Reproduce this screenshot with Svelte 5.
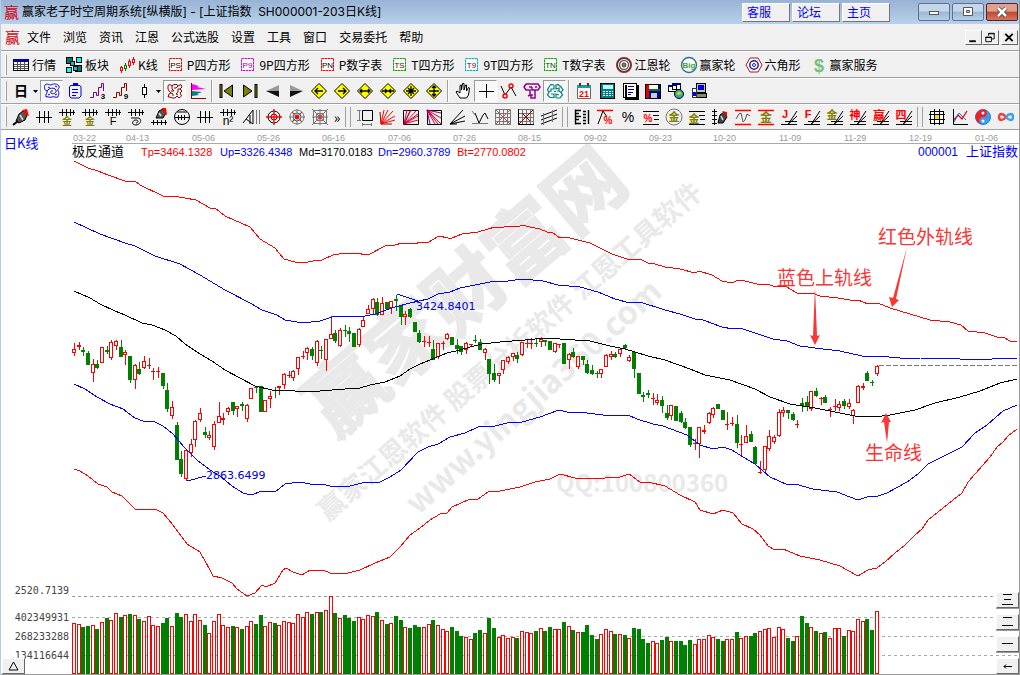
<script>
  const cjk = 'font-family="Noto Sans CJK SC, sans-serif"';
  const lat = 'font-family="Liberation Sans, sans-serif"';
  const crisp = 'shape-rendering="crispEdges"';

  const line = (d, c = '#000', w = 1) => `<path d="${d}" fill="none" stroke="${c}" stroke-width="${w}"/>`;
  const shape = (d, f, s = 'none') => `<path d="${d}" fill="${f}" stroke="${s}"/>`;
  const glyph = (t, x, y, size, c, bold = false, fam = cjk) =>
    `<text x="${x}" y="${y}" font-size="${size}" fill="${c}" text-anchor="middle" ${bold ? 'font-weight="700"' : ''} ${fam}>${t}</text>`;
  const boxed = (t, border, ink) =>
    `<rect x="2.5" y="2.5" width="12" height="12" fill="#fff" stroke="${border}" stroke-dasharray="2 1" ${crisp}/>` +
    `<rect x="2.5" y="2.5" width="12" height="12" fill="none" stroke="${border}" stroke-opacity="0.5" ${crisp}/>` + glyph(t, 8.5, 12, 8, ink, false, lat);
  const diamond = (inner) => shape('M9 1.5L16.5 9L9 16.5L1.5 9Z', '#ffff00', '#000') + line(inner, '#000', 1.3);
  const comb = line('M1 4.5H17M4.5 1V8M8.5 1V8M12.5 1V8M15.5 2V7');
  const pen = shape('M4 13L7 6L11 3L15 7L13 12L7 15Z', '#555', '#000') + shape('M10 2L15 1L17 8L14 7Z', '#f00') + line('M8 7L11 12', '#ddd', 1.5) + line('M1 17L6 13', '#000', 2);
  const slopes = line('M1 16.5H8L17 3M8 16.5L17 8M8 16.5H17M5 13.5H17');
  const fan = (c, box = '') => box + line('M2 16L5 2M2 16L9 2M2 16L14 3M2 16L16 8M2 16L16 12', c);
  const nine = line('M1.5 1.5H16.5V16.5H1.5ZM1.5 5.5H16.5M1.5 9.5H16.5M1.5 13.5H16.5M5.5 1.5V16.5M9.5 1.5V16.5M13.5 1.5V16.5', '#777');
  const ring = (r, c, w = 1.5, f = 'none') => `<circle cx="9" cy="9" r="${r}" fill="${f}" stroke="${c}" stroke-width="${w}"/>`;

  const art = {
    table: `<g ${crisp}>` + shape('M1.5 3.5H16.5V14.5H1.5Z', '#fff', '#000') + shape('M1 3H17V6H1Z', '#0000a0') + line('M2 8.5H16M2 10.5H16M2 12.5H16M5.5 6V14M8.5 6V14M12.5 6V14', '#555') + '</g>',
    board: `<g ${crisp}>` + shape('M1.5 1.5H7.5V7.5H1.5ZM10.5 9.5H16.5V15.5H10.5Z', '#007878', '#000') + shape('M11.5 1.5H16.5V6.5H11.5ZM1.5 11.5H6.5V16.5H1.5Z', '#00ffff', '#000') + shape('M5.5 5.5H9.5V9.5H5.5ZM8.5 10.5H12.5V14.5H8.5Z', '#00c8c8', '#000') + '</g>',
    candles: `<g ${crisp}>` + line('M3.5 10V17M15.5 1V9M11.5 3V12', '#f00') + line('M7.5 7V15', '#008000') + shape('M2.5 11.5H4.5V14.5H2.5ZM14.5 3.5H16.5V6.5H14.5ZM10.5 5.5H12.5V9.5H10.5Z', '#fff', '#f00') + shape('M6.5 9.5H8.5V12.5H6.5Z', '#fff', '#008000') + '</g>',
    ps: boxed('PS', '#f00', '#000'), p9: boxed('P9', '#e000e0', '#900090'), pn: boxed('PN', '#f00', '#000'),
    ts: boxed('TS', '#00b000', '#800000'), t9: boxed('T9', '#00b8b8', '#800000'), tn: boxed('TN', '#00b000', '#004000'),
    wheel: ring(7, '#842838', 2, '#fff') + ring(4.5, '#507860') + ring(2, '#842838', 1, '#5a8a6a'),
    big: ring(7.5, '#287088', 1.3, '#fff') + glyph('Big', 9, 12, 8, '#3a9a3a', true, lat),
    hex: shape('M5 2H13L17 9L13 16H5L1 9Z', '#fff', '#b01020') + ring(4.2, '#2020a0') + ring(1.5, '#2020a0', 1),
    dollar: glyph('$', 9, 16, 18, '#78c078', true, lat),
    day: glyph('日', 9, 14, 14, '#000', true),
    flow: line('M2 3C4 1 6 3 8 3C11 1 14 2 16 4C17 6 14 7 15 9C17 11 15 13 15 15C13 16 11 14 9 15C6 16 4 14 3 15C2 12 5 11 4 9C1 8 1 5 2 3ZM4 9C6 6 11 5 13 8C14 11 10 13 8 11C7 10 8 8 10 9M5 5L7 6M12 4L14 5M5 13L7 12M12 13L14 12', '#0000e0'),
    clip: line('M4.5 3.5H14L15 5V14L13 16H5L3.5 14V5ZM6 7.5H12M6 10.5H12M6 13.5H10', '#0000e0') + shape('M7 1H12V4H7Z', '#0000e0'),
    wave3: line('M1 15.5H4.5V10.5H7.5V13.5H9.5V5.5H12.5V1.5H14.5V9', '#800080') + glyph('3', 14, 17, 8, '#000', true, lat),
    wave9: line('M1 15.5H4.5V10.5H7.5V13.5H9.5V5.5H12.5V1.5H14.5V9', '#900000') + glyph('9', 14, 17, 8, '#000', true, lat),
    candle: `<g ${crisp}>` + line('M9.5 2V5M9.5 13V16') + shape('M7.5 5.5H11.5V12.5H7.5Z', '#fff', '#000') + '</g>',
    gear: line('M2 3.5L4 2.5L6 4L8 2.5H11L12 4L15 2.5L16 5L14 7L16 9L14 11L15.500 14L13 16L11 14L9 16H6L4 15H2L3 12L5 11L3 9L2 7ZM6 4V7L8 9H5M12 4L10 6H8M14 7H12V10L10 12L12 13M5 11L7 12V14', '#900000'),
    flags: `<g ${crisp}>` + line('M2.5 1V16.5H17', '#900000') + '</g>' + shape('M3 2L10 4L8 5L17 7L3 8Z', '#ff00ff') + shape('M3 9L13 10L8 12L10 13L3 14Z', '#008080'),
    first: shape('M14.5 3V15L6 9Z', '#808000', '#000') + line('M3 2V16', '#000', 3) + line('M3 3V15', '#808000'),
    last: shape('M2.5 3V15L11 9Z', '#808000', '#000') + line('M15 2V16', '#000', 3) + line('M15 3V15', '#808000'),
    prev: shape('M2 9L15 3V9Z', '#999') + shape('M2 9L15 15V9Z', '#111'),
    next: shape('M16 9L3 3V9Z', '#999') + shape('M16 9L3 15V9Z', '#111'),
    dl: diamond('M5 9H13M8 6L5 9L8 12'), dr: diamond('M5 9H13M10 6L13 9L10 12'),
    dlr: diamond('M4 9H14M6 7L4 9L6 11M12 7L14 9L12 11'), din: diamond('M3 9H15M6 7L8 9L6 11M12 7L10 9L12 11'),
    dall: diamond('M4 9H14M9 4V14M6 6L12 12M12 6L6 12'), dud: diamond('M4 9H14M9 4V14M7 6L9 4L11 6M7 12L9 14L11 12'),
    hand: shape('M6 16L2 10L3 9L6 11V3.5L7.5 3V8L8.5 1.5H10V8L11.5 3H12.5V9L14.5 5.5L15.5 6L14.5 13L12.5 16Z', '#fff', '#000'),
    cross: `<g ${crisp}>` + line('M2 9.5H17M9.5 2V16') + '</g>',
    nodes: line('M1 4L5 13L11 5L16 14') + `<circle cx="5" cy="14" r="2" fill="none" stroke="#f00" stroke-width="1.5"/><circle cx="11" cy="4" r="2" fill="none" stroke="#f00" stroke-width="1.5"/>`,
    maze: line('M3 2H15L17 5L15 8H12V16H8V13H10M12 8H9V5M3 2L1 5L3 8H7V13L5 14M6 5H9M12 5H14', '#900090', 1.5),
    brain: line('M8 3L5 2.500L3 5L1.500 8L3 10L1.500 13L4 15.500H8V12H5M8 3V7H5V9L3 10M10 16V12L13 13M10 16H14L16.500 13L15 10.500L17 8L15 5L12 2.500L10 3V7L13 6V9H11M8 9.500H10M13 9L15 10.500', '#008080', 1.2),
    cal: shape('M2.5 3.5H15.5V16.5H2.5Z', '#fff', '#666') + shape('M2 3H16V6H2Z', '#00a8a8') + shape('M4 1H6V4H4ZM12 1H14V4H12Z', '#b00') + glyph('21', 9, 15, 9, '#f00', true, lat),
    calc: `<g ${crisp}>` + shape('M2.5 1.5H16.5V16.5H2.5Z', '#008080', '#000') + shape('M5 3H15V7H5Z', '#bff') + line('M5 9.5H15M5 11.5H15M5 13.5H15', '#fff') + line('M7.5 8V15M10.5 8V15M13.5 8V15', '#008080') + '</g>',
    note: `<g ${crisp}>` + shape('M2.5 1.5H15.5V15.5H2.5Z', '#fff', '#000') + line('M16.5 3V17H4', '#000', 2) + line('M7 4.5H13M7 7.5H13M7 10.5H12M7 12.5H10', '#0000a0') + line('M4.5 3V15', '#000', 2) + '</g>',
    disk: `<g ${crisp}>` + shape('M1.5 2.5H16.5V16.5H1.5Z', '#0000a0', '#000') + shape('M5 3H14V9H5Z', '#fff') + shape('M5 7H16V9H5Z', '#008000') + shape('M2 3H5V16H2Z', '#e00000') + shape('M7 11H13V16H7Z', '#ccc') + '</g>',
    globe: `<g ${crisp}>` + shape('M1.5 3.5H9.5V9.5H1.5ZM5.5 1.5H13.5V7.5H5.5Z', '#fff', '#000') + shape('M5 1H14V3H5ZM1 3H5V5H1Z', '#0000a0') + '</g><circle cx="12" cy="12" r="4.5" fill="#20b0b0" stroke="#000"/>' + shape('M9 12L12 9L15 12L12 13Z', '#e0d000'),
    pc: `<g ${crisp}>` + shape('M6.5 1.5H15.5V10.5H6.5Z', '#c8c8a0', '#000') + shape('M8 3H14V8H8Z', '#0000e0') + shape('M4.5 11.5H16.5V15.5H4.5Z', '#88886a', '#000') + shape('M2.5 6.5H6.5V15.5H2.5Z', '#fff', '#333') + shape('M3 10H6V14H3Z', '#0000e0') + '</g>',
    pen, ticks: line('M1 9.5H17M4.5 3V15M9.5 3V15M13.5 3V15'),
    gold: comb + glyph('金', 9, 17, 10, '#808000', true),
    combF: comb + glyph('F', 9, 17, 11, '#000', false, lat),
    spiral: comb + line('M4 10H12C16 13 12 17 9 17C4 17 5 12 9 12C12 12 11 15 9 15'),
    penbar: shape('M6 10L9 3L13 1L16 5L13 10Z', '#555', '#000') + shape('M12 0L16 0L17 7L14 5Z', '#f00') + line('M9 5L11 8', '#ddd', 1.5) + line('M1 14.5H17M3.5 12V17M7.5 12V17M11.5 12V17M15.5 12V17'),
    dial: ring(7.5, '#000', 1) + line('M2 9.5H16M5.5 7V12M8.5 7V12M11.5 7V12M4 4H14'),
    n2: comb + glyph('n²', 9, 17, 12, '#000', false, lat),
    tri: line('M1 15L11 2V16L4 11M8 7V16') + line('M14.5 2V16M17.5 2V16', '#777'),
    target: ring(6, '#000', 1) + ring(3, '#900000', 1) + line('M1 9H17M9 1V17', '#f00', 1.3),
    sun: ring(7, '#777', 1) + ring(4, '#008080', 1) + line('M1 9H17M9 1V17', '#777') + line('M4 4L14 14M14 4L4 14', '#f00') + ring(1.5, '#f00', 1, '#f00'),
    web: line('M2.5 2.5H15.5V15.5H2.5ZM5.5 5.5H12.5V12.5H5.5ZM1 1L17 17M17 1L1 17M9 1V17M1 9H17', '#777') + ring(2, '#f00', 1),
    frame: line('M6.5 2.5H16.5V12.5H6.5Z') + line('M1 2.5H5M1 12.5H5M3.5 2V13M6.5 15V18M15.5 15V18M6 16.5H16', '#777'),
    fanR: fan('#f00', line('M2 16L1 4M2 16L13 16', '#900000')),
    fanB: fan('#f00', line('M1.5 2.5H16.5V16.5H1.5Z')) + line('M2 16L8 3M2 16L16 6', '#900090'),
    fanD: line('M2.5 2.5H16.5V16.5H2.5Z') + line('M2 2L16 16M2 2L10 16M2 2L16 10', '#f00') + line('M2 2L5 16M2 2L16 5M2 2L13 16', '#900090'),
    fanK: line('M2 16L15 2M2 16L17 8M2 16L17 13M2 16H9'),
    zig: line('M4 5L8 15L12 7L14 5L17 11') + line('M1 3L4 7M1 15.5H17', '#777'),
    grid: nine + line('M2 2L16 16M16 2L2 16', '#b06060'),
    gridK: nine + line('M1.5 1V16.5H17') + line('M2 16L16 2M5 5L13 13', '#900000'),
    chan: line('M1 8L17 2M1 12L17 6M1 16L17 10') + line('M3.5 5V17M12.5 2V14', '#777'),
    ruler: line('M2.5 1.5V16.5M2 2.5H8M2 5.5H6M2 8.5H8M2 11.5H6M2 15.5H8M15.5 2V16M10 3.5H13M10 6.5H13M10 9.5H13M10 12.5H13M10 15.5H13', '#000', 1.4),
    pctA: line('M1 2.5H17', '#f00', 1.5) + line('M2 16L7 3L11 9') + glyph('%', 12, 16, 10, '#f00', true, lat),
    pct: glyph('%', 9, 14, 14, '#000', false, lat),
    pctL: glyph('%', 6, 14, 10, '#f00', true, lat) + line('M1 3.5H17M11 7.5H17M12 11.5H17M1 16.5H17'),
    goldO: ring(8, '#777', 1) + glyph('金', 9, 13, 11, '#808000', true),
    goldL: glyph('金', 6, 15, 11, '#808000', true) + line('M1 3.5H17M11 7.5H17M12 11.5H17M1 16.5H17'),
    penV: line('M3.5 1V17M1 3.5H6M1 7.5H6M1 11.5H6M1 15.5H6') + shape('M7 15L9 7L13 4L16 9L12 15Z', '#444', '#000') + shape('M11 3L16 4L16 9Z', '#f00') + line('M10 8L12 12', '#ddd', 1.5),
    sine: line('M1 2.5H17M1 16.5H17', '#f00', 1.5) + line('M2 11L5 6L7 5L9 14L11 12L13 6L16 8', '#555'),
    goldR: glyph('金', 9, 14, 12, '#808000', true) + line('M1 2.5H17M1 16.5H17', '#f00', 1.5),
    sJ: slopes + glyph('J', 5, 10, 11, '#f00', true, lat), sF: slopes + glyph('F', 5, 10, 11, '#f00', true, lat),
    sG: slopes + glyph('金', 6, 11, 11, '#808000', true), sS: slopes + glyph('神', 6, 11, 11, '#f00', true),
    sY: slopes + glyph('赢', 7, 12, 12, '#f00', true), sQ: slopes + glyph('四', 6, 11, 11, '#f00', true),
    cells: `<g ${crisp}>` + shape('M2.5 3.5H15.5V15.5H2.5Z', '#fff', '#000') + shape('M6 6H12V12H6Z', '#ffe000') + line('M1 6.5H17M1 11.5H17M6.5 1V17M11.5 1V17') + '</g>',
    plot: line('M2.5 1V16.5H17') + line('M3 12L7 7L11 11L16 3', '#f00', 1.4) + line('M3 14L8 5L15 12', '#0080c0'),
    yin: ring(7.5, '#2080e0', 1, '#3c9af0') + shape('M9 1.5A7.5 7.5 0 0 0 9 16.5A3.7 3.7 0 0 1 9 9A3.7 3.7 0 0 0 9 1.5Z', '#f02020') + '<circle cx="9" cy="5" r="1.5" fill="#fff"/><circle cx="9" cy="13" r="1.5" fill="#fff"/>',
    inf: line('M9 9C6 5 2 5 2 9C2 13 6 13 9 9', '#f04040', 2.4) + line('M9 9C12 5 16 5 16 9C16 13 12 13 9 9', '#40a0e0', 2.4)
  };

  const menus = ['文件', '浏览', '资讯', '江恩', '公式选股', '设置', '工具', '窗口', '交易委托', '帮助'];
  const features = [
    ['table', '行情'], ['board', '板块'], ['candles', 'K线'], ['ps', 'P四方形'], ['p9', '9P四方形'], ['pn', 'P数字表'],
    ['ts', 'T四方形'], ['t9', '9T四方形'], ['tn', 'T数字表'], ['wheel', '江恩轮'], ['big', '赢家轮'], ['hex', '六角形'], ['dollar', '赢家服务']
  ];
  const controls = [
    ['day', '▾', '*flow', 'clip', 'wave3', 'wave9', 'candle', '▾', '*gear', 'flags'],
    ['first', 'last', 'prev', 'next', 'dl', 'dr', 'dlr', 'din', 'dall', 'dud'],
    ['hand', '*cross', 'nodes', 'maze', '*brain'],
    ['cal', 'calc', 'note', 'disk', 'globe', 'pc']
  ];
  const drawing = [
    ['pen', 'ticks', 'gold', 'gold', 'combF', 'spiral', 'penbar', 'dial', 'ticks', 'n2', 'tri', 'target', 'sun', 'web', '»'],
    ['frame', 'fanR', 'fanB', 'fanD', 'fanK', 'zig', 'grid', 'gridK', 'chan'],
    ['ruler', 'pctA', 'pct', 'pctL', 'goldO', 'goldL', 'penV', 'sine', 'goldR', 'sJ', 'sF', 'sG', 'sS', 'sY', 'sQ'],
    ['cells', 'plot', 'yin', 'inf']
  ];

  const dates = ['03-22', '04-13', '05-06', '05-26', '06-16', '07-06', '07-26', '08-15', '09-02', '09-23', '10-20', '11-09', '11-29', '12-19', '01-06'];
  const dateX = [73, 126, 192, 257, 322, 388, 453, 518, 584, 649, 713, 779, 844, 909, 975];

  const up = '#ff0000';
  const down = '#008000';
  const centre = (i) => Math.round(74 + (i * 14) / 3);

  // Height of each volume bar in thirds of a unit below the panel top; g marks a falling day.
  const volumes = (
    '160 163 171g 168g 166 177g 157 144g 151 130 141g 136 132g 136 147g 154 139 166 169 159g 144g 169 129g 141g 133 154 133 151 165g 190 154 133 166 172 168g 172 177g 169 154 162g 135g 169 157 159g 166 154 157 160 133 142 127 132g 127 126g 121 79 129g 145 ' +
    '135g 144g 153g 142 148 136 139 126g 151 162g 160 138g 150g 172 174g 165g 171g 172 163 150g 166 178 184 171g 183g 198g 202 208 189g 180g 190 144g 174g 202 196 205 202 204g 184 187 190 183g 175 183g 171g 178 178 156g 169 180g 187 186g 165g 195g 207g 193 178 184 192g 193 195g 205 174g 177g 207g 219g 214 220 210g 201g 214 213g 213g ' +
    '225g 210g 223 208 208 196 202 207g 213g 208 208 186g 205 199 198g 189g 184 178 175 202 172 178 204g 213g 199 138g 159g 172 183g 190 186g 205 175 175 198g 181 184 148 154 147g 180g 124'
  ).split(' ').map((v, i) => ({ x: centre(i) - 2, y: Math.round(570 + parseInt(v) / 3), fall: v.endsWith('g') }));

  // high, body top, body bottom, low
  const block = (top, s) => s.split(';').map((r) => r.split(',').map((v) => Math.round(top + v / 3)));
  const days = [
    ...block(310, '99,118,128,137;97,106,112,121;112,121,125,139;124,129,164,164;146,163,190,217;151,162,173,178;112,112,158,160;108,120,125,132;90,97,143,150;90,94,107,121;90,111,140,140;121,127,136,165;138,139,209,220;162,166,211,236;156,177,192,196;139,154,173,177;145,165,167,177;175,184,187,209;172,184,184,203;189,189,227,237;219,240,296,307;274,292,317,326;336,345,449,449;423,447,491,500;420,421,508,513;387,403,430,440;331,332,391,410;294,310,331,336;351,366,375,383;363,376,385,391;334,343,410,419;276,319,340,340;309,325,331,344;291,295,307,316;276,277,302,315;287,287,298,321;276,283,289,304;283,284,328,335;233,233,268,268;230,230,232,248;228,228,305,305;271,271,307,307;243,257,266,294;231,240,243,263;228,229,235,254;189,192,226,237;184,195,197,205;181,184,205,213;142,142,178,196;123,137,139,147;112,115,130,149;111,117,137,149;90,94,160,168;109,120,122,146;88,88,151,182;19,73,86,86;61,69,93,99'),
    ...block(270, '173,180,229,231;165,180,183,201;172,183,191,217;190,190,230,230;175,178,226,232;142,149,172,172;105,118,131,131;85,88,117,133;85,97,136,138;82,99,135,135;97,97,117,117;93,94,115,133;74,88,92,124;106,106,141,165;122,133,142,165;114,117,140,144;156,156,186,186;180,189,215,219;199,214,217,232;198,215,217,231;210,237,270,270;219,220,262,268;213,219,221,240;190,193,206,210;201,201,224,224;208,226,238,252;228,229,247,255;217,220,241,252;222,223,225,231;195,210,214,219;207,216,241,241;235,238,250,271;267,267,312,341;282,309,331,336;308,310,317,341;270,271,301,313;258,262,277,283;250,250,262,274;247,255,266,278;217,217,254,258;210,219,222,235;204,220,223,238;205,219,223,231;201,208,216,231;210,210,217,228;214,214,239,239;218,220,246,248;222,222,225,235;220,220,281,283;250,253,271,297;234,246,262,265;258,259,292,297;258,259,270,285;270,283,309,313;285,300,313,315;303,309,311,323;297,298,313,323;252,256,290,290;244,253,262,270;246,252,261,264;234,238,253,262;223,226,234,240;256,262,272,276;246,247,296,323;309,309,371,371;367,375,380,396;361,370,374,384;370,383,385,405;371,391,398,405'),
    ...block(330, '197,210,228,250;226,249,265,271;226,226,259,269;228,228,272,272;243,249,276,278;264,276,293,297;291,291,345,351;327,340,342,361;291,292,342,383;285,300,306,312;246,248,279,282;231,235,256,264;222,222,237,237;240,240,271,271;246,282,285,301;261,279,281,289;255,283,339,353;315,343,346,374;285,319,338,338;303,312,336,336;348,351,402,406;393,426,428,432;348,349,419,426;300,317,356,362;315,322,335,341;237,247,319,321;231,240,250,260;240,240,248,268;246,252,270,273;270,281,284,294;205,219,229,246;198,216,232,242;183,184,237,242;174,183,198,200;200,203,206,226;195,202,219,220;231,236,241,261;207,229,232,244;212,223,233,244;208,213,229,237;207,218,230,237;237,240,258,281;165,169,220,220;159,167,175,180;123,129,153,153;150,157,160,167;106,107,133,139')
  ].map((d, i) => ({ x: centre(i), high: d[0], top: d[1], h: Math.max(1, d[2] - d[1]), low: d[3], fall: volumes[i]?.fall }));

  const curves = [
    [up, '74,161 88,168 98,171 108,175 125,181 135,181 140,185 163,196 173,196 185,198 196,200 210,208 215,208 225,216 250,227 260,239 275,248 284,259 295,262 303,263 318,260 322,260 333,255 345,253 358,253 365,255 370,254 385,246 395,245 402,243 415,244 420,242 428,243 432,240 439,236 448,238 452,238 462,234 478,232 488,229 495,227 500,228 508,226 518,227 522,225 530,227 540,229 547,232 552,232 560,238 566,237 590,243 600,248 612,254 630,260 640,259 648,263 655,264 665,267 680,269 695,273 699,271 712,275 722,281 732,283 738,280 745,281 761,285 767,284 773,286 785,286 797,293 807,294 812,293 820,296 838,298 850,300 858,300 868,304 878,303 890,308 910,314 930,320 950,322 961,325 968,331 985,333 1000,338 1003,337 1010,341 1017,342'],
    ['#0000ff', '74,222 100,234 125,243 135,246 155,256 180,264 200,275 225,290 250,303 262,310 277,315 285,320 303,323 320,321 332,317 365,316 375,314 395,307 410,303 428,299 438,294 450,292 460,288 480,284 495,281 508,281 522,279 543,281 558,285 580,287 598,292 615,299 630,303 640,302 665,310 680,314 695,319 703,320 722,327 733,329 740,328 755,333 773,339 787,341 800,346 815,348 840,351 862,356 870,357 878,356 900,358 920,358 960,359 985,360 1000,358 1017,359'],
    ['#000000', '74,291 90,298 100,304 115,311 125,315 142,323 152,325 165,330 176,336 185,344 200,354 212,361 225,370 240,378 255,386 272,390 295,391 320,391 345,389 360,388 370,385 385,382 400,376 410,369 420,364 435,358 447,353 460,350 470,347 482,344 500,342 525,340 545,338 560,339 590,341 610,346 625,349 635,352 648,356 665,360 690,369 705,375 715,377 730,380 755,389 770,397 790,404 815,408 840,413 855,416 875,417 890,415 915,410 935,403 960,397 980,391 1000,383 1017,379'],
    ['#0000ff', '74,384 85,389 97,397 110,404 123,409 135,418 143,421 155,422 163,426 173,434 185,448 197,460 210,470 220,476 232,486 243,493 251,495 262,491 275,492 285,484 300,482 315,485 322,484 330,486 350,486 362,483 380,482 390,477 401,470 418,452 428,447 438,444 450,437 465,433 478,427 495,426 507,423 522,422 540,417 559,410 567,412 587,413 603,415 622,416 628,415 637,419 653,424 663,426 687,435 700,445 713,449 723,447 732,450 743,457 755,464 770,477 788,485 795,484 813,489 837,492 850,497 858,500 867,497 878,496 887,493 907,482 918,474 928,464 942,457 962,447 975,433 987,425 1003,411 1017,405'],
    [up, '74,469 80,471 88,476 98,484 107,487 112,492 122,496 135,509 155,509 163,513 173,525 187,544 200,552 210,570 213,576 222,578 232,583 237,589 247,596 255,593 262,585 266,587 275,583 283,570 286,568 293,572 302,575 310,570 323,570 330,573 344,574 360,570 375,563 390,557 400,547 410,535 420,528 430,520 440,514 447,513 452,507 470,499 478,499 488,492 500,491 520,487 535,482 550,479 560,474 575,478 590,479 605,478 620,477 629,474 640,482 648,482 665,486 680,495 695,502 700,510 713,514 723,510 733,513 742,524 753,529 760,535 768,546 775,550 783,549 800,556 820,560 840,566 847,570 858,576 868,570 877,568 885,562 895,553 905,545 915,535 922,529 928,520 938,512 948,504 962,493 968,482 983,465 990,457 997,447 1003,442 1008,436 1017,429']
  ];
</script>

{#snippet icon(name)}
  <svg class="icon" viewBox="0 0 18 18" aria-hidden="true">{@html art[name]}</svg>
{/snippet}

{#snippet strip(groups, split)}
  {#each groups as group, g}
    {#if g > 0}<span class={split}></span>{/if}
    {#each group as item}
      {#if item === '▾'}
        <button class="drop" aria-label="drop"><svg viewBox="0 0 8 18"><path d="M1 8H6L3.5 11Z" /></svg></button>
      {:else if item === '»'}
        <button class="more">»</button>
      {:else}
        {@const name = item.replace('*', '')}
        <button class="tool" class:pressed={item[0] === '*'} aria-label={name}>{@render icon(name)}</button>
      {/if}
    {/each}
  {/each}
{/snippet}

<div class="window">
  <header class="title">
    <span class="logo">赢</span>
    <span class="caption">赢家老子时空周期系统[纵横版] - [上证指数&nbsp;&nbsp;SH000001-203日K线]</span>
    <div class="links">
      <button>客服</button><button>论坛</button><button>主页</button>
    </div>
    <div class="frame-buttons">
      <button aria-label="minimize"><svg viewBox="0 0 30 16"><rect x="10.500" y="7.500" width="9" height="3" fill="#fff" stroke="#555" /></svg></button>
      <button aria-label="maximize"><svg viewBox="0 0 30 16"><path d="M10.500 3.500H19.500V11.500H10.500ZM13.500 6.500H16.500V8.500H13.500Z" fill="#fff" fill-rule="evenodd" stroke="#555" /></svg></button>
      <button class="close" aria-label="close"><svg viewBox="0 0 30 16"><path d="M11 4L19 12M19 4L11 12" stroke="#444" stroke-width="4" /><path d="M11 4L19 12M19 4L11 12" stroke="#fff" stroke-width="2.500" /></svg></button>
    </div>
  </header>

  <nav class="menu">
    <span class="logo">赢</span>
    {#each menus as m}<button>{m}</button>{/each}
    <div class="doc-buttons">
      <button aria-label="minimize document"><svg viewBox="0 0 14 14"><path d="M3 11H10" stroke-width="2" /></svg></button>
      <button aria-label="restore document"><svg viewBox="0 0 14 14"><path d="M5.500 5V2.500H11.500V8.500H9M5 3H12M2.500 6.500H8.500V11.500H2.500ZM2 7H9" fill="none" /></svg></button>
      <button class="apart" aria-label="close document"><svg viewBox="0 0 14 14"><path d="M3 3L11 11M11 3L3 11" stroke-width="2" /></svg></button>
    </div>
  </nav>

  <div class="bar features">
    <span class="grip"></span>
    {#each features as [name, label]}
      <button class="feature">{@render icon(name)}<span>{label}</span></button>
    {/each}
  </div>
  <div class="bar controls"><span class="grip"></span>{@render strip(controls, 'split')}</div>
  <div class="bar drawing"><span class="grip"></span>{@render strip(drawing, 'dock')}</div>

  <main class="chart">
    <svg class="plot" viewBox="1 130 1018 545">
      <g class="watermark">
        <text class="heavy" font-size="78" transform="translate(335 439) rotate(-40.300)">赢家财富网</text>
        <text font-size="27" transform="translate(328 522) rotate(-41)">赢家江恩软件 股票分析软件 江恩工具软件</text>
        <text font-size="32" transform="translate(418 516) rotate(-42)">www.yingjia360.com</text>
        <text font-size="24" x="556" y="492">QQ:100800360</text>
      </g>

      <path class="axis" d="M72 143.500H1019" />
      {#each dates as d, i}<text class="date" x={dateX[i]} y="141">{d}</text>{/each}

      <text class="period" x="4" y="148">日K线</text>
      <text class="name" x="72" y="156">极反通道</text>
      <text class="value red" x="141" y="156">Tp=3464.1328</text>
      <text class="value blue" x="220" y="156">Up=3326.4348</text>
      <text class="value" x="299" y="156">Md=3170.0183</text>
      <text class="value blue" x="378" y="156">Dn=2960.3789</text>
      <text class="value red" x="457" y="156">Bt=2770.0802</text>
      <text class="code blue" x="918" y="156">000001</text>
      <text class="name blue" x="966" y="156">上证指数</text>

      <g class="guides">
        <path class="strong" d="M72 596.500H994" />
        <path d="M72 617.500H994M72 636.500H994M72 655.500H1019" />
      </g>

      <g shape-rendering="crispEdges">
        {#each volumes as v}
          {#if v.fall}
            <rect x={v.x} y={v.y} width="4" height={674 - v.y} fill={down} />
          {:else}
            <rect x={v.x + 0.5} y={v.y + 0.5} width="3" height={673 - v.y} fill="#fff" stroke={up} />
          {/if}
        {/each}

        {#each days as d}
          <rect x={d.x} y={d.high} width="1" height={Math.max(1, d.low - d.high)} fill={d.fall ? down : up} />
          {#if d.fall}
            <rect x={d.x - 2} y={d.top} width="4" height={d.h} fill={down} />
          {:else if d.h < 2}
            <rect x={d.x - 2} y={d.top} width="4" height="1" fill={up} />
          {:else}
            <rect x={d.x - 1.5} y={d.top + 0.5} width="3" height={d.h - 1} fill="#fff" stroke={up} />
          {/if}
        {/each}

        {#each curves as [color, points]}
          <polyline {points} fill="none" stroke={color} />
        {/each}
        <path class="lead" d="M187 481L206 476M397 294L418 301" />
        <path class="last" d="M879 365.500H1019" />
      </g>

      <text class="extreme" x="206" y="479">2863.6499</text>
      <text class="extreme" x="416" y="310">3424.8401</text>

      <g class="note">
        <text x="878" y="244">红色外轨线</text>
        <text x="777" y="285">蓝色上轨线</text>
        <text x="865" y="460">生命线</text>
        <path d="M907 247L896 299L899 300L892 307L889 297L893 298Z" />
        <path d="M815 287L817 336L820 335L815 345L810 335L813 336Z" />
        <path d="M887 443L889 422L891 422L886 413L881 423L884 422Z" />
      </g>

      <g class="scale">
        <text x="69" y="594">2520.7139</text>
        <text x="69" y="621">402349931</text>
        <text x="69" y="640">268233288</text>
        <text x="69" y="659">134116644</text>
      </g>
    </svg>

    <button class="pad corner" aria-label="expand"><svg viewBox="0 0 20 14"><path d="M6 11H15L10.500 3Z" fill="none" /></svg></button>
    <div class="panes">
      <button class="pad" aria-label="three panes"><svg viewBox="0 0 20 14"><path d="M6 1.500H15M7 6.500H14M5 11.500H16" /></svg></button>
      <button class="pad" aria-label="two panes"><svg viewBox="0 0 20 14"><path d="M6 2.500H15M5 10.500H16" /></svg></button>
      <button class="pad" aria-label="one pane"><svg viewBox="0 0 20 14"><path d="M5 6.500H16" /></svg></button>
      <button class="pad" aria-label="back"><svg viewBox="0 0 20 14"><path d="M7 7.500H15M9 5.500L7 7.500L9 9.500" fill="none" /></svg></button>
    </div>
  </main>
</div>

<style>
  :global(body) { margin: 0; background: #fff; }
  .window {
    box-sizing: border-box;
    min-height: 100vh;
    display: flex;
    flex-direction: column;
    border-left: 1px solid #b4cdea;
    border-right: 1px solid #999;
    font: 12px/16px "Noto Sans CJK SC", sans-serif;
    color: #000;
  }
  button { font: inherit; color: inherit; padding: 0; margin: 0; border: 0; background: none; flex: none; }
  svg { display: block; }
  .logo { width: 16px; flex: none; font-size: 15px; color: #d00010; }
  .icon { width: 18px; height: 18px; overflow: visible; }

  .title {
    height: 24px;
    display: flex;
    align-items: center;
    padding: 0 1px 0 3px;
    background: linear-gradient(#98b3d4, #b8d0ec);
    gap: 2px;
    white-space: nowrap;
    box-sizing: border-box;
  }
  .caption { flex: 1; font-family: Inter, "Noto Sans CJK SC", sans-serif; }
  .links { display: flex; gap: 2px; margin-right: 26px; }
  .links button {
    width: 48px;
    height: 19px;
    padding-left: 4px;
    text-align: left;
    line-height: 16px;
    color: #0000ff;
    background: #f0f0f0;
    border: 1px solid #fff;
    border-right-color: #777;
    border-bottom-color: #777;
  }
  .frame-buttons { display: flex; gap: 2px; }
  .frame-buttons button {
    width: 32px;
    height: 18px;
    box-sizing: border-box;
    border: 1px solid #5c7390;
    border-radius: 2px;
    background: linear-gradient(#c4d6ea 45%, #9cb6d4 50%, #b8cfe8);
  }
  .frame-buttons svg { width: 30px; height: 16px; }
  .frame-buttons .close { background: linear-gradient(#e0a090 45%, #c04830 50%, #d07860); border-color: #5a2020; }

  .menu {
    height: 26px;
    display: flex;
    align-items: center;
    padding: 0 1px 0 4px;
    background: #f0f0f0;
    border-bottom: 1px solid #a0a0a0;
  }
  .menu > button { margin-left: 6px; margin-right: 6px; }
  .doc-buttons { display: flex; margin-left: auto; }
  .doc-buttons button, .pad {
    background: #f0f0f0;
    border: 1px solid #fff;
    border-right-color: #666;
    border-bottom-color: #666;
  }
  .doc-buttons button { width: 17px; height: 15px; box-sizing: border-box; }
  .doc-buttons svg { width: 14px; height: 13px; stroke: #000; }
  .doc-buttons .apart { margin-left: 2px; }

  .bar {
    height: 26px;
    display: flex;
    align-items: center;
    background: #f0f0f0;
    border-top: 1px solid #fff;
    border-bottom: 1px solid #a0a0a0;
    box-sizing: border-box;
    white-space: nowrap;
  }
  .features { height: 27px; gap: 9px; }
  .features .grip { margin-right: -4px; }
  .grip { flex: none; width: 1px; height: 20px; margin: 0 2px 0 4px; border-left: 1px solid #fff; background: #a0a0a0; }
  .feature { display: flex; align-items: center; gap: 2px; }
  .tool { width: 23px; height: 22px; display: flex; align-items: center; justify-content: center; box-sizing: border-box; }
  .pressed { background: #f8f8f8; border: 1px solid #999; border-right-color: #fff; border-bottom-color: #fff; }
  .drop { width: 8px; }
  .drop svg { width: 8px; height: 18px; }
  .more { width: 12px; height: 22px; font-size: 14px; line-height: 12px; }
  .split { flex: none; width: 1px; height: 22px; margin: 0 2px; background: #a0a0a0; border-right: 1px solid #fff; }
  .dock { flex: none; width: 4px; height: 20px; margin: 0 2px; border-left: 1px solid #a0a0a0; border-right: 1px solid #a0a0a0; }

  .chart { position: relative; flex: 1; background: #fff; }
  .plot { width: 100%; height: auto; box-shadow: inset 0 -1px #999; overflow: visible; }
  .watermark { fill: #e9e9e9; font-weight: 700; }
  .heavy { stroke: #e9e9e9; stroke-width: 2px; }
  .axis { stroke: #aaa; }
  .date { font: 9px "Liberation Sans", sans-serif; fill: #999; }
  .period { font-size: 13px; fill: #00f; }
  .name { font-size: 13px; }
  .value { font: 11px "Liberation Sans", sans-serif; }
  .code { font: 12px "Liberation Sans", sans-serif; }
  .red { fill: #f00; }
  .blue { fill: #00f; }
  .guides path { stroke: #aaa; stroke-dasharray: 3 3; }
  .guides .strong { stroke: #999; }
  .lead { stroke: #00f; fill: none; }
  .last { stroke: #777; stroke-dasharray: 5 2; }
  .extreme { font: 11px "DejaVu Sans", sans-serif; fill: #0000e0; }
  .note { font-size: 19px; fill: #fb3636; }
  .scale { font: 10px "DejaVu Sans Mono", monospace; fill: #444; text-anchor: end; }

  .pad { width: 23px; height: 16px; box-sizing: border-box; box-shadow: 0 1px #999; }
  .pad svg { width: 20px; height: 14px; stroke: #000; }
  .corner { position: absolute; left: 1px; bottom: 1px; }
  .panes { position: absolute; right: 0; bottom: 1px; display: flex; flex-direction: column; gap: 6px; }
</style>
